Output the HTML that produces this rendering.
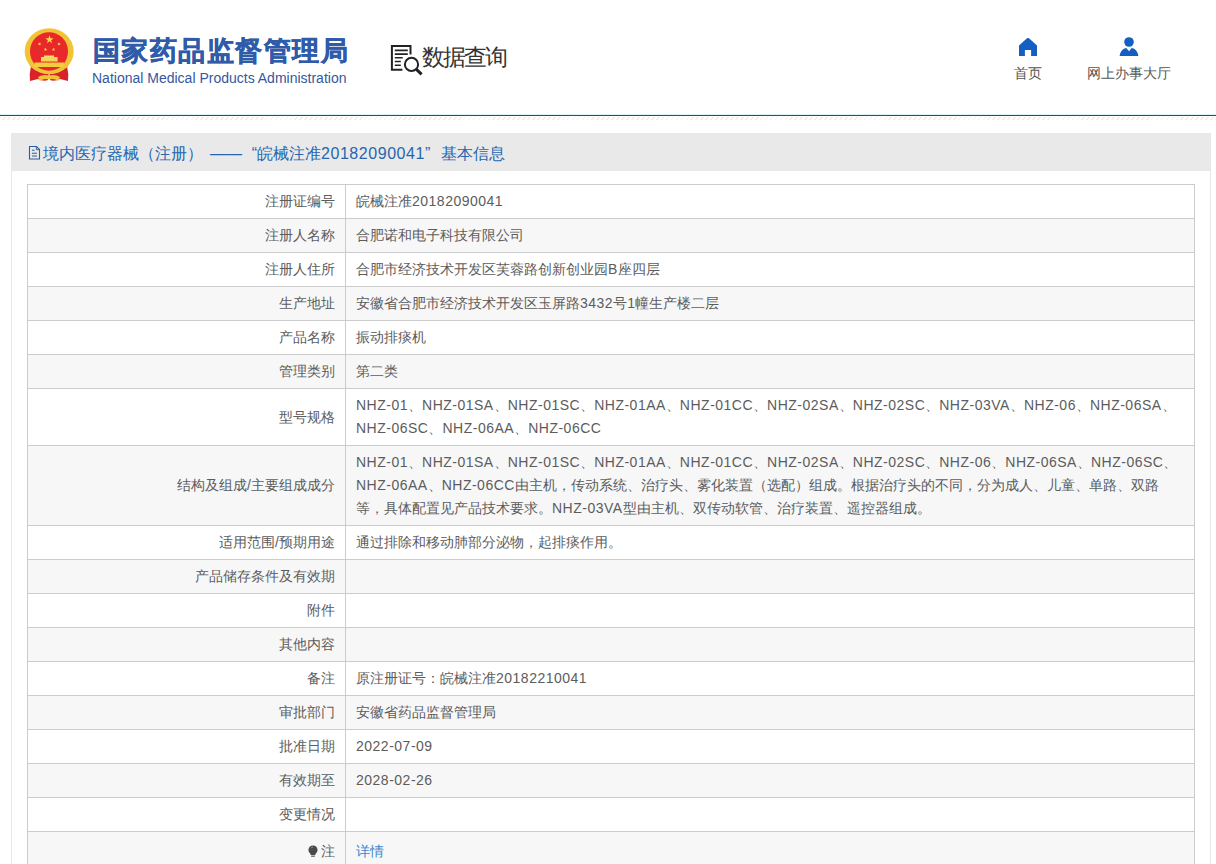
<!DOCTYPE html>
<html><head><meta charset="utf-8">
<style>
*{margin:0;padding:0;box-sizing:border-box}
html,body{width:1216px;height:864px;overflow:hidden;background:#fff;font-family:"Liberation Sans",sans-serif;color:#555}
#hdr{position:absolute;left:0;top:0;width:1216px;height:115px;background:#fff}
#emb{position:absolute;left:20px;top:25px;width:60px;height:62px}
#t1{position:absolute;left:92px;top:35px;font-size:27px;font-weight:900;color:#2f5ba8;letter-spacing:1.5px;-webkit-text-stroke:0.5px #2f5ba8;white-space:nowrap;line-height:32px}
#t2{position:absolute;left:92px;top:69.5px;font-size:14px;color:#34589e;white-space:nowrap;line-height:16px}
#qicon{position:absolute;left:386px;top:40px;width:40px;height:40px}
#qtxt{position:absolute;left:422px;top:42px;font-size:23px;letter-spacing:-2.1px;color:#333;white-space:nowrap;line-height:30px}
.nav{position:absolute;top:36px;text-align:center;font-size:14px;color:#555;white-space:nowrap}
.nav svg{display:block;margin:0 auto}
#line{position:absolute;left:0;top:115px;width:1216px;height:1px;background:#1f4f80}
#hatch{position:absolute;left:0;top:117px;width:1216px;height:3px;background:repeating-linear-gradient(135deg,#fbeadc 0,#fbeadc 1.2px,#fff 1.2px,#fff 3.5px)}
#line0{position:absolute;left:0;top:114px;width:1216px;height:1px;background:#dcf5fb}
#panel{position:absolute;left:11px;top:133px;width:1200px;height:760px;border:1px solid #e8e8e8;border-top:none;background:#fff}
#ptitle{position:absolute;left:-1px;top:0;width:1199px;height:38px;background:#e9e9e9;font-size:16px;color:#2666b0;line-height:41px;padding-left:17px;white-space:nowrap}
table{position:absolute;left:15px;top:51px;width:1168px;border-collapse:collapse;table-layout:fixed;font-size:14px;color:#5c5c5c}
td{overflow:hidden;border:1px solid #ccc;line-height:23px;padding:5px 10px 5px 10px;vertical-align:middle;white-space:nowrap}
td.l{width:318px;text-align:right;padding-right:10px}
i{font-style:normal;letter-spacing:0.5px}
tr:nth-child(even) td{background:#f7f7f7}
tr.last td{padding-top:8px}
a{color:#3b86d0;text-decoration:none}
.fw{display:inline-block;width:16px}
.dg{letter-spacing:0.55px}
u{display:inline-block;width:1em;text-align:center;text-decoration:none;letter-spacing:0}
#t1 u{width:28.5px}
#qtxt u{width:20.9px}
</style></head><body>
<div id="hdr">
  <svg id="emb" viewBox="20 25 60 62">
    <path d="M31 66 Q29 74 30 81 L38 79 Q44 82 48 80 L49 70 Z" fill="#d8232a"/>
    <path d="M67 66 Q69 74 68 81 L60 79 Q54 82 50 80 L49 70 Z" fill="#d8232a"/>
    <ellipse cx="49.2" cy="51.2" rx="24.5" ry="23" fill="#f2c335"/>
    <ellipse cx="49" cy="51.5" rx="19" ry="19.3" fill="#e8282b"/>
    <rect x="44" y="55.5" width="10" height="1.6" fill="#f8e070"/>
    <rect x="41" y="57" width="16.6" height="4.5" fill="#f6d65a"/>
    <path d="M34.5 62.5 H64 V67 H34.5Z" fill="#f3cd3e"/><path d="M30 63 Q49 80 68 63 L68.5 66 Q49 82 29.5 66Z" fill="#f2c335"/>
    <path d="M38 77 Q43 74 49 75.5 Q55 74 60 77 L58 81 Q54 78 49 79.5 Q44 78 40 81 Z" fill="#f2c335"/>
    <polygon points="49.50,35.20 50.53,38.18 53.68,38.24 51.17,40.14 52.09,43.16 49.50,41.36 46.91,43.16 47.83,40.14 45.32,38.24 48.47,38.18" fill="#f8d840"/><polygon points="40.25,42.21 40.23,43.58 41.50,44.07 40.20,44.47 40.12,45.83 39.34,44.71 38.02,45.06 38.84,43.97 38.10,42.83 39.39,43.27" fill="#f8d840"/><polygon points="58.35,42.21 59.21,43.27 60.50,42.83 59.76,43.97 60.58,45.06 59.26,44.71 58.48,45.83 58.40,44.47 57.10,44.07 58.37,43.58" fill="#f8d840"/><polygon points="45.83,47.63 46.05,48.97 47.38,49.24 46.17,49.86 46.33,51.21 45.37,50.25 44.13,50.82 44.75,49.61 43.82,48.61 45.17,48.82" fill="#f8d840"/><polygon points="53.17,47.63 53.83,48.82 55.18,48.61 54.25,49.61 54.87,50.82 53.63,50.25 52.67,51.21 52.83,49.86 51.62,49.24 52.95,48.97" fill="#f8d840"/>
  </svg>
  <div id="t1"><u>国</u><u>家</u><u>药</u><u>品</u><u>监</u><u>督</u><u>管</u><u>理</u><u>局</u></div>
  <div id="t2">National Medical Products Administration</div>
  <svg id="qicon" viewBox="0 0 40 40">
    <path d="M5.9 22 V29.7 H16.4 M5.9 29.7 V6.1 H24.5 V14.4" fill="none" stroke="#222" stroke-width="2"/>
    <path d="M8.8 10.4 H21.8 M8.8 14.1 H21.8 M8.8 17.8 H16.7 M8.8 21.5 H14.8 M8.8 25.2 H14.8" stroke="#222" stroke-width="1.6"/>
    <circle cx="25.5" cy="24.4" r="6.6" fill="none" stroke="#222" stroke-width="2"/>
    <path d="M30.2 29.2 L35.6 34.4" stroke="#222" stroke-width="3"/>
  </svg>
  <div id="qtxt"><u>数</u><u>据</u><u>查</u><u>询</u></div>
  <div class="nav" style="left:1012px;width:32px">
    <svg width="22" height="20" viewBox="0 0 22 20"><path d="M2 9.5 L10 2.3 Q11 1.5 12 2.3 L20 9.5 V20 H14.1 V14 H7.9 V20 H2 Z" fill="#135fc2"/></svg>
    <div style="margin-top:8px;line-height:18px"><u>首</u><u>页</u></div>
  </div>
  <div class="nav" style="left:1086px;width:86px">
    <svg width="22" height="20" viewBox="0 0 22 20"><circle cx="11" cy="6" r="4.8" fill="#135fc2"/><path d="M1.5 20.6 Q2.5 13 8.3 12 L11 15.2 L13.7 12 Q19.5 13 20.5 20.6 Z" fill="#135fc2"/></svg>
    <div style="margin-top:8px;line-height:18px"><u>网</u><u>上</u><u>办</u><u>事</u><u>大</u><u>厅</u></div>
  </div>
</div>
<div id="line0"></div><div id="line"></div>
<div id="hatch"></div>
<div id="panel">
  <div id="ptitle"><svg width="13" height="15" viewBox="0 0 13 15" style="vertical-align:-1px;margin-right:2px"><path d="M1.5 1.5 H8.5 L11.5 4.5 V14 H1.5 Z" fill="none" stroke="#2a5f9e" stroke-width="1.1"/><path d="M8.3 1.5 V4.7 H11.5" fill="none" stroke="#2a5f9e" stroke-width="0.9"/><path d="M4 5.3 H6.5 M4 8.3 H9 M4 11 H9" stroke="#2a5f9e" stroke-width="1.1"/></svg><u>境</u><u>内</u><u>医</u><u>疗</u><u>器</u><u>械</u><u>（</u><u>注</u><u>册</u><u>）</u><span style="display:inline-block;width:39px;text-align:right;letter-spacing:0">——</span><span class="fw" style="text-align:right;width:15px">“</span><u>皖</u><u>械</u><u>注</u><u>准</u><span class="dg">20182090041</span><span class="fw">”</span><u>基</u><u>本</u><u>信</u><u>息</u></div>
  <table>
    <tr><td class="l"><u>注</u><u>册</u><u>证</u><u>编</u><u>号</u></td><td><u>皖</u><u>械</u><u>注</u><u>准</u><i>20182090041</i></td></tr>
    <tr><td class="l"><u>注</u><u>册</u><u>人</u><u>名</u><u>称</u></td><td><u>合</u><u>肥</u><u>诺</u><u>和</u><u>电</u><u>子</u><u>科</u><u>技</u><u>有</u><u>限</u><u>公</u><u>司</u></td></tr>
    <tr><td class="l"><u>注</u><u>册</u><u>人</u><u>住</u><u>所</u></td><td><u>合</u><u>肥</u><u>市</u><u>经</u><u>济</u><u>技</u><u>术</u><u>开</u><u>发</u><u>区</u><u>芙</u><u>蓉</u><u>路</u><u>创</u><u>新</u><u>创</u><u>业</u><u>园</u><i>B</i><u>座</u><u>四</u><u>层</u></td></tr>
    <tr><td class="l"><u>生</u><u>产</u><u>地</u><u>址</u></td><td><u>安</u><u>徽</u><u>省</u><u>合</u><u>肥</u><u>市</u><u>经</u><u>济</u><u>技</u><u>术</u><u>开</u><u>发</u><u>区</u><u>玉</u><u>屏</u><u>路</u><i>3432</i><u>号</u><i>1</i><u>幢</u><u>生</u><u>产</u><u>楼</u><u>二</u><u>层</u></td></tr>
    <tr><td class="l"><u>产</u><u>品</u><u>名</u><u>称</u></td><td><u>振</u><u>动</u><u>排</u><u>痰</u><u>机</u></td></tr>
    <tr><td class="l"><u>管</u><u>理</u><u>类</u><u>别</u></td><td><u>第</u><u>二</u><u>类</u></td></tr>
    <tr><td class="l"><u>型</u><u>号</u><u>规</u><u>格</u></td><td><i>NHZ-01</i><u>、</u><i>NHZ-01SA</i><u>、</u><i>NHZ-01SC</i><u>、</u><i>NHZ-01AA</i><u>、</u><i>NHZ-01CC</i><u>、</u><i>NHZ-02SA</i><u>、</u><i>NHZ-02SC</i><u>、</u><i>NHZ-03VA</i><u>、</u><i>NHZ-06</i><u>、</u><i>NHZ-06SA</i><u>、</u><br><i>NHZ-06SC</i><u>、</u><i>NHZ-06AA</i><u>、</u><i>NHZ-06CC</i></td></tr>
    <tr><td class="l"><u>结</u><u>构</u><u>及</u><u>组</u><u>成</u>/<u>主</u><u>要</u><u>组</u><u>成</u><u>成</u><u>分</u></td><td><i>NHZ-01</i><u>、</u><i>NHZ-01SA</i><u>、</u><i>NHZ-01SC</i><u>、</u><i>NHZ-01AA</i><u>、</u><i>NHZ-01CC</i><u>、</u><i>NHZ-02SA</i><u>、</u><i>NHZ-02SC</i><u>、</u><i>NHZ-06</i><u>、</u><i>NHZ-06SA</i><u>、</u><i>NHZ-06SC</i><u>、</u><br><i>NHZ-06AA</i><u>、</u><i>NHZ-06CC</i><u>由</u><u>主</u><u>机</u><u>，</u><u>传</u><u>动</u><u>系</u><u>统</u><u>、</u><u>治</u><u>疗</u><u>头</u><u>、</u><u>雾</u><u>化</u><u>装</u><u>置</u><u>（</u><u>选</u><u>配</u><u>）</u><u>组</u><u>成</u><u>。</u><u>根</u><u>据</u><u>治</u><u>疗</u><u>头</u><u>的</u><u>不</u><u>同</u><u>，</u><u>分</u><u>为</u><u>成</u><u>人</u><u>、</u><u>儿</u><u>童</u><u>、</u><u>单</u><u>路</u><u>、</u><u>双</u><u>路</u><br><u>等</u><u>，</u><u>具</u><u>体</u><u>配</u><u>置</u><u>见</u><u>产</u><u>品</u><u>技</u><u>术</u><u>要</u><u>求</u><u>。</u><i>NHZ-03VA</i><u>型</u><u>由</u><u>主</u><u>机</u><u>、</u><u>双</u><u>传</u><u>动</u><u>软</u><u>管</u><u>、</u><u>治</u><u>疗</u><u>装</u><u>置</u><u>、</u><u>遥</u><u>控</u><u>器</u><u>组</u><u>成</u><u>。</u></td></tr>
    <tr><td class="l"><u>适</u><u>用</u><u>范</u><u>围</u>/<u>预</u><u>期</u><u>用</u><u>途</u></td><td><u>通</u><u>过</u><u>排</u><u>除</u><u>和</u><u>移</u><u>动</u><u>肺</u><u>部</u><u>分</u><u>泌</u><u>物</u><u>，</u><u>起</u><u>排</u><u>痰</u><u>作</u><u>用</u><u>。</u></td></tr>
    <tr><td class="l"><u>产</u><u>品</u><u>储</u><u>存</u><u>条</u><u>件</u><u>及</u><u>有</u><u>效</u><u>期</u></td><td></td></tr>
    <tr><td class="l"><u>附</u><u>件</u></td><td></td></tr>
    <tr><td class="l"><u>其</u><u>他</u><u>内</u><u>容</u></td><td></td></tr>
    <tr><td class="l"><u>备</u><u>注</u></td><td><u>原</u><u>注</u><u>册</u><u>证</u><u>号</u><u>：</u><u>皖</u><u>械</u><u>注</u><u>准</u><i>20182210041</i></td></tr>
    <tr><td class="l"><u>审</u><u>批</u><u>部</u><u>门</u></td><td><u>安</u><u>徽</u><u>省</u><u>药</u><u>品</u><u>监</u><u>督</u><u>管</u><u>理</u><u>局</u></td></tr>
    <tr><td class="l"><u>批</u><u>准</u><u>日</u><u>期</u></td><td><i>2022-07-09</i></td></tr>
    <tr><td class="l"><u>有</u><u>效</u><u>期</u><u>至</u></td><td><i>2028-02-26</i></td></tr>
    <tr><td class="l"><u>变</u><u>更</u><u>情</u><u>况</u></td><td></td></tr>
    <tr class="last"><td class="l"><svg width="10" height="12" viewBox="0 0 11 13" style="vertical-align:-1px;margin-right:3px"><path d="M5.5 0.5 C8.5 0.5 10.5 2.6 10.5 5.3 C10.5 7.3 9.3 8.3 8.4 9.5 L8 11 H3 L2.6 9.5 C1.7 8.3 0.5 7.3 0.5 5.3 C0.5 2.6 2.5 0.5 5.5 0.5 Z" fill="#4a4a4a"/><rect x="3.5" y="11.6" width="4" height="1.2" fill="#4a4a4a"/><path d="M3.2 3.5 Q4 2.3 5.3 2.1" stroke="#aaa" stroke-width="1" fill="none"/></svg><u>注</u></td><td><a><u>详</u><u>情</u></a></td></tr>
  </table>
</div>
</body></html>
